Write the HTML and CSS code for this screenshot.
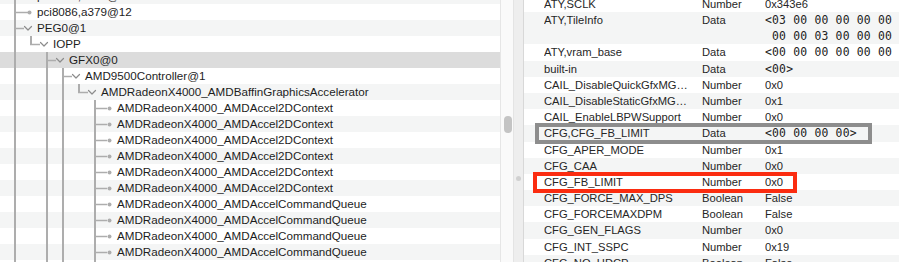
FILE: index.html
```html
<!DOCTYPE html>
<html>
<head>
<meta charset="utf-8">
<link rel="stylesheet" href="styles.css">
</head>
<body>
<div class="window">
  <div class="tree">
    <div class="tree-rows">
      <div class="trow alt"><svg class="guide" width="37" height="16"><path class="ln" d="M15 0V16"/><path class="hz" d="M15 8.5H28"/><circle class="dt" cx="29.5" cy="8.5" r="2"/></svg><span class="label">pci8086,a3b0@1B</span></div>
      <div class="trow"><svg class="guide" width="37" height="16"><path class="ln" d="M15 0V16"/><path class="hz" d="M15 8.5H28"/><circle class="dt" cx="29.5" cy="8.5" r="2"/></svg><span class="label">pci8086,a379@12</span></div>
      <div class="trow alt"><svg class="guide" width="37" height="16"><path class="ln" d="M15 0V16"/><path class="hz" d="M15 8.5H24"/><polyline class="chev" points="24.5,6.5 28,10 31.5,6.5"/></svg><span class="label">PEG0@1</span></div>
      <div class="trow"><svg class="guide" width="53" height="16"><path class="ln" d="M15 0V16M31 0V9"/><path class="hz" d="M30 8.5H40"/><polyline class="chev" points="40.5,6.5 44,10 47.5,6.5"/></svg><span class="label">IOPP</span></div>
      <div class="trow sel"><svg class="guide" width="69" height="16"><path class="ln" d="M15 0V16M47 0V16"/><path class="hz" d="M47 8.5H56"/><polyline class="chev" points="56.5,6.5 60,10 63.5,6.5"/></svg><span class="label">GFX0@0</span></div>
      <div class="trow"><svg class="guide" width="85" height="16"><path class="ln" d="M15 0V16M47 0V16M63 0V16"/><path class="hz" d="M63 8.5H72"/><polyline class="chev" points="72.5,6.5 76,10 79.5,6.5"/></svg><span class="label">AMD9500Controller@1</span></div>
      <div class="trow alt"><svg class="guide" width="101" height="16"><path class="ln" d="M15 0V16M47 0V16M63 0V16M79 0V9"/><path class="hz" d="M78 8.5H88"/><polyline class="chev" points="88.5,6.5 92,10 95.5,6.5"/></svg><span class="label">AMDRadeonX4000_AMDBaffinGraphicsAccelerator</span></div>
      <div class="trow"><svg class="guide" width="117" height="16"><path class="ln" d="M15 0V16M47 0V16M63 0V16M95 0V16"/><path class="hz" d="M95 8.5H107"/><circle class="dt" cx="109.5" cy="8.5" r="2"/></svg><span class="label">AMDRadeonX4000_AMDAccel2DContext</span></div>
      <div class="trow alt"><svg class="guide" width="117" height="16"><path class="ln" d="M15 0V16M47 0V16M63 0V16M95 0V16"/><path class="hz" d="M95 8.5H107"/><circle class="dt" cx="109.5" cy="8.5" r="2"/></svg><span class="label">AMDRadeonX4000_AMDAccel2DContext</span></div>
      <div class="trow"><svg class="guide" width="117" height="16"><path class="ln" d="M15 0V16M47 0V16M63 0V16M95 0V16"/><path class="hz" d="M95 8.5H107"/><circle class="dt" cx="109.5" cy="8.5" r="2"/></svg><span class="label">AMDRadeonX4000_AMDAccel2DContext</span></div>
      <div class="trow alt"><svg class="guide" width="117" height="16"><path class="ln" d="M15 0V16M47 0V16M63 0V16M95 0V16"/><path class="hz" d="M95 8.5H107"/><circle class="dt" cx="109.5" cy="8.5" r="2"/></svg><span class="label">AMDRadeonX4000_AMDAccel2DContext</span></div>
      <div class="trow"><svg class="guide" width="117" height="16"><path class="ln" d="M15 0V16M47 0V16M63 0V16M95 0V16"/><path class="hz" d="M95 8.5H107"/><circle class="dt" cx="109.5" cy="8.5" r="2"/></svg><span class="label">AMDRadeonX4000_AMDAccel2DContext</span></div>
      <div class="trow alt"><svg class="guide" width="117" height="16"><path class="ln" d="M15 0V16M47 0V16M63 0V16M95 0V16"/><path class="hz" d="M95 8.5H107"/><circle class="dt" cx="109.5" cy="8.5" r="2"/></svg><span class="label">AMDRadeonX4000_AMDAccel2DContext</span></div>
      <div class="trow"><svg class="guide" width="117" height="16"><path class="ln" d="M15 0V16M47 0V16M63 0V16M95 0V16"/><path class="hz" d="M95 8.5H107"/><circle class="dt" cx="109.5" cy="8.5" r="2"/></svg><span class="label">AMDRadeonX4000_AMDAccelCommandQueue</span></div>
      <div class="trow alt"><svg class="guide" width="117" height="16"><path class="ln" d="M15 0V16M47 0V16M63 0V16M95 0V16"/><path class="hz" d="M95 8.5H107"/><circle class="dt" cx="109.5" cy="8.5" r="2"/></svg><span class="label">AMDRadeonX4000_AMDAccelCommandQueue</span></div>
      <div class="trow"><svg class="guide" width="117" height="16"><path class="ln" d="M15 0V16M47 0V16M63 0V16M95 0V16"/><path class="hz" d="M95 8.5H107"/><circle class="dt" cx="109.5" cy="8.5" r="2"/></svg><span class="label">AMDRadeonX4000_AMDAccelCommandQueue</span></div>
      <div class="trow alt"><svg class="guide" width="117" height="16"><path class="ln" d="M15 0V16M47 0V16M63 0V16M95 0V16"/><path class="hz" d="M95 8.5H107"/><circle class="dt" cx="109.5" cy="8.5" r="2"/></svg><span class="label">AMDRadeonX4000_AMDAccelCommandQueue</span></div>
      <div class="trow"><svg class="guide" width="117" height="16"><path class="ln" d="M15 0V16M47 0V16M63 0V16M95 0V16"/><path class="hz" d="M95 8.5H107"/><circle class="dt" cx="109.5" cy="8.5" r="2"/></svg><span class="label">AMDRadeonX4000_AMDAccelCommandQueue</span></div>
    </div>
  </div>
  <div class="vscroll"><div class="thumb"></div></div>
  <div class="divider"><div class="dot"></div></div>
  <div class="props">
    <div class="prows">
      <div class="prow"><span class="name">ATY,SCLK</span><span class="type">Number</span><span class="val">0x343e6</span></div>
      <div class="prow alt tall"><span class="name">ATY,TileInfo</span><span class="type">Data</span><span class="val mono">&lt;03 00 00 00 00 00 00 00 00
 00 00 03 00 00 00 00 00 00</span></div>
      <div class="prow"><span class="name">ATY,vram_base</span><span class="type">Data</span><span class="val mono">&lt;00 00 00 00 00 00 00 00&gt;</span></div>
      <div class="prow alt"><span class="name">built-in</span><span class="type">Data</span><span class="val mono">&lt;00&gt;</span></div>
      <div class="prow"><span class="name">CAIL_DisableQuickGfxMG…</span><span class="type">Number</span><span class="val">0x0</span></div>
      <div class="prow alt"><span class="name">CAIL_DisableStaticGfxMG…</span><span class="type">Number</span><span class="val">0x1</span></div>
      <div class="prow"><span class="name">CAIL_EnableLBPWSupport</span><span class="type">Number</span><span class="val">0x0</span></div>
      <div class="prow alt"><span class="name">CFG,CFG_FB_LIMIT</span><span class="type">Data</span><span class="val mono">&lt;00 00 00 00&gt;</span></div>
      <div class="prow"><span class="name">CFG_APER_MODE</span><span class="type">Number</span><span class="val">0x1</span></div>
      <div class="prow alt"><span class="name">CFG_CAA</span><span class="type">Number</span><span class="val">0x0</span></div>
      <div class="prow"><span class="name">CFG_FB_LIMIT</span><span class="type">Number</span><span class="val">0x0</span></div>
      <div class="prow alt"><span class="name">CFG_FORCE_MAX_DPS</span><span class="type">Boolean</span><span class="val">False</span></div>
      <div class="prow"><span class="name">CFG_FORCEMAXDPM</span><span class="type">Boolean</span><span class="val">False</span></div>
      <div class="prow alt"><span class="name">CFG_GEN_FLAGS</span><span class="type">Number</span><span class="val">0x0</span></div>
      <div class="prow"><span class="name">CFG_INT_SSPC</span><span class="type">Number</span><span class="val">0x19</span></div>
      <div class="prow alt"><span class="name">CFG_NO_HDCP</span><span class="type">Boolean</span><span class="val">False</span></div>
    </div>
  </div>
  <div class="mark mark-gray"></div>
  <div class="mark mark-red"></div>
</div>
</body>
</html>
```

FILE: styles.css
```css
html, body {
  margin: 0;
  padding: 0;
  background: #ffffff;
}

body {
  font-family: "Liberation Sans", Arial, sans-serif;
  color: #1f1f1f;
}

.window {
  position: relative;
  display: flex;
  width: 899px;
  height: 262px;
  overflow: hidden;
  background: #ffffff;
}

/* ---------- left outline ---------- */
.tree {
  width: 500px;
  flex: none;
  overflow: hidden;
}

.tree-rows {
  margin-top: -12px;
}

.trow {
  display: flex;
  align-items: center;
  height: 16px;
  white-space: nowrap;
  font-size: 11.65px;
  line-height: 16px;
}

.trow.alt {
  background: #f4f5f5;
}

.trow.sel {
  background: #dcdcdc;
}

.guide {
  flex: none;
  display: block;
}

.guide .ln {
  stroke: #adadad;
  stroke-width: 2;
  fill: none;
}

.guide .hz {
  stroke: #adadad;
  stroke-width: 1.5;
  fill: none;
}

.guide .dt {
  fill: #adadad;
}

.guide .chev {
  fill: none;
  stroke: #8c8c8c;
  stroke-width: 1.2;
  stroke-linecap: round;
  stroke-linejoin: round;
}

.label {
  color: #1d1d1d;
}

/* ---------- scroller + split divider ---------- */
.vscroll {
  width: 12px;
  flex: none;
  background: #fafafa;
  border-left: 1px solid #e6e6e6;
}

.thumb {
  width: 8px;
  height: 17px;
  margin: 116px 0 0 3px;
  border-radius: 4px;
  background: #c4c4c4;
}

.divider {
  width: 9px;
  flex: none;
  background: #eeeeee;
  border-left: 1px solid #e4e4e4;
  border-right: 1px solid #d8d8d8;
}

.dot {
  width: 5px;
  height: 5px;
  margin: 176px 0 0 2px;
  border-radius: 50%;
  background: #d0d0d0;
}

/* ---------- right property table ---------- */
.props {
  flex: 1;
  overflow: hidden;
}

.prows {
  margin-top: -4.2px;
}

.prow {
  display: grid;
  grid-template-columns: 158px 63px 1fr;
  padding-left: 20px;
  height: 16.2px;
  font-size: 11.2px;
  line-height: 16.2px;
  color: #262626;
  white-space: nowrap;
}

.prow.alt {
  background: #f4f5f5;
}

.prow.tall {
  height: 32.4px;
}

.name, .type, .val {
  overflow: hidden;
}

.val.mono {
  font-family: "DejaVu Sans Mono", "Liberation Mono", monospace;
  font-size: 11.4px;
  letter-spacing: 0.2px;
  white-space: pre;
  color: #222222;
}

/* ---------- annotation frames ---------- */
.mark {
  position: absolute;
  box-sizing: border-box;
  border-style: solid;
  border-width: 4px;
}

.mark-gray {
  left: 535px;
  top: 123px;
  width: 337px;
  height: 21px;
  border-color: #8d8d8d;
}

.mark-red {
  left: 533px;
  top: 172px;
  width: 264px;
  height: 21px;
  border-color: #fb2c10;
}
```
